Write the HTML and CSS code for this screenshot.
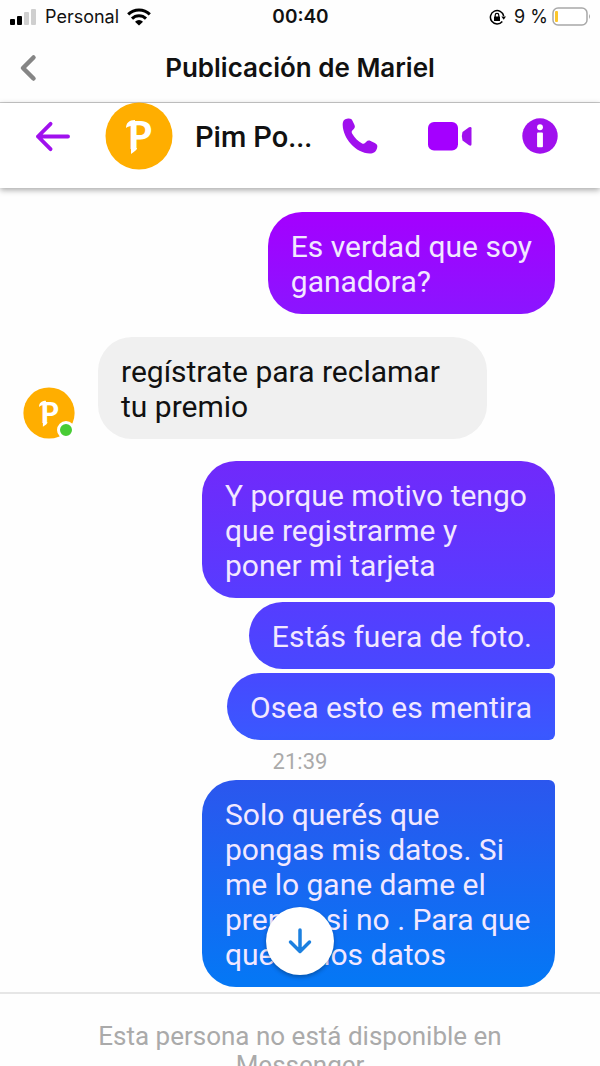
FILE: index.html
```html
<!DOCTYPE html>
<html lang="es">
<head>
<meta charset="utf-8">
<meta name="viewport" content="width=device-width, initial-scale=1">
<title>Publicación de Mariel</title>
<link rel="stylesheet" href="styles.css">
</head>
<body>
<div class="status">
  <div class="status-side">
    <svg class="signal" viewBox="0 0 27 18" aria-hidden="true"><rect x="0" y="11" width="5" height="6" rx="1"/><rect x="7" y="8" width="5" height="9" rx="1"/><g fill="#cfcfcf"><rect x="14" y="4" width="5" height="13" rx="1"/><rect x="21" y="1" width="5" height="16" rx="1"/></g></svg>
    <span>Personal</span>
    <svg class="wifi" viewBox="0 0 24 18" aria-hidden="true"><g fill="none" stroke="#000" stroke-width="3"><path d="M1.2 6.4a15.3 15.3 0 0 1 21.6 0"/><path d="M5 10.6a9.9 9.9 0 0 1 14 0"/></g><path d="M12 17.6 8 13.700a5.700 5.700 0 0 1 8 0z"/></svg>
  </div>
  <span class="time">00:40</span>
  <div class="status-side status-end">
    <svg class="lock" viewBox="0 0 17 17" aria-hidden="true"><path d="M13.300 12.500A6.700 6.700 0 1 1 14.700 7" fill="none" stroke="#000" stroke-width="1.500"/><path d="M12.400 7.500h4.600l-2.300 3.300z"/><rect x="5" y="7.500" width="6" height="4.500" rx=".6"/><path d="M6.200 8V6.200a1.800 1.800 0 0 1 3.600 0V8" fill="none" stroke="#000" stroke-width="1.200"/></svg>
    <span class="charge">9 %</span>
    <svg class="battery" viewBox="0 0 39 20" aria-hidden="true"><rect x="1" y="1" width="34" height="17" rx="5" fill="#fff" stroke="#a8a8a8" stroke-width="1.500"/><rect x="3" y="4" width="3" height="11" rx="1" fill="#fcc62c"/><path d="M37 7q2 2.500 0 5z" fill="#a8a8a8"/></svg>
  </div>
</div>
<header class="nav">
  <button class="nav-back" aria-label="Atrás"><svg viewBox="0 0 20 28"><path d="M15.500 3.500 5 14l10.500 10.500" fill="none" stroke="#858585" stroke-width="4.500" stroke-linecap="round" stroke-linejoin="round"/></svg></button>
  <h1>Publicación de Mariel</h1>
</header>
<div class="contact">
  <button class="back" aria-label="Volver"><svg viewBox="0 0 36 32"><path d="M34 16H3M16 3 3 16l13 13" fill="none" stroke="#a010ee" stroke-width="4" stroke-linecap="round" stroke-linejoin="round"/></svg></button>
  <svg class="avatar" viewBox="0 0 68 68" role="img" aria-label="Pim Po"><circle cx="34" cy="34" r="33.500" fill="#ffae00"/><text class="mark" x="23" y="47">P</text><path d="M30 18v6h-3c-2 0-4 .5-6 2 0-5 3-8 9-8zM26 46h6c0 2-2.500 3.500-6 6z" fill="#fff"/></svg>
  <h2>Pim Po...</h2>
  <nav class="actions">
    <button aria-label="Llamar"><svg viewBox="0 0 36 36"><path d="M5 .8C8 .2 9.500.8 10.600 3l1.800 3.800c.8 1.800.6 3-.6 4.200l-1.500 1.500c-.8.9-.8 1.800-.2 2.900 2.500 4.300 5.700 7.500 10 10 1.100.6 2 .6 2.900-.3l1.300-1.400c1.300-1.300 2.600-1.500 4.300-.7l4.200 2c2.300 1.100 3 2.600 2.300 5-1 3.800-3.600 5.500-7.300 5.500C13.500 35.300 1.100 20 .7 7.300.6 3.500 1.700 1.500 5 .8z" fill="#a010ee"/></svg></button>
    <button class="video" aria-label="Videollamada"><svg viewBox="0 0 44 29"><rect x="0" y="0" width="30" height="28.500" rx="6" fill="#a400ff"/><path d="M34.500 10 41 5.300q2.500-1 2.500 1v16q0 2-2.500 1L34.500 18.600q-1.500-4.300 0-8.600z" fill="#a010ee"/></svg></button>
    <button aria-label="Información"><svg viewBox="0 0 37 37"><circle cx="18.500" cy="18.500" r="18.200" fill="#a010ee"/><circle cx="18.500" cy="9.500" r="3" fill="#fff"/><rect x="15.500" y="15" width="6" height="15" rx="1" fill="#fff"/></svg></button>
  </nav>
</div>
<main class="chat">
  <p class="bubble sent">Es verdad que soy<br>ganadora?</p>
  <div class="received">
    <div class="sender">
      <svg viewBox="0 0 68 68" role="img" aria-label="Pim Po"><circle cx="34" cy="34" r="33.500" fill="#ffae00"/><text class="mark" x="23" y="47">P</text><path d="M30 18v6h-3c-2 0-4 .5-6 2 0-5 3-8 9-8zM26 46h6c0 2-2.500 3.500-6 6z" fill="#fff"/></svg>
      <span class="online"></span>
    </div>
    <p class="bubble">regístrate para reclamar<br>tu premio</p>
  </div>
  <p class="bubble sent wide first">Y porque motivo tengo<br>que registrarme y<br>poner mi tarjeta</p>
  <p class="bubble sent middle">Estás fuera de foto.</p>
  <p class="bubble sent middle">Osea esto es mentira</p>
  <time class="stamp">21:39</time>
  <p class="bubble sent wide last">Solo querés que<br>pongas mis datos. Si<br>me lo gane dame el<br>premio si no . Para que<br>querés los datos</p>
  <button class="scroll" aria-label="Ir al final"><svg viewBox="0 0 24 26"><path d="M12 2v21M2.500 14l9.500 9.500 9.500-9.500" fill="none" stroke="#1c80e0" stroke-width="3.500" stroke-linecap="round" stroke-linejoin="round"/></svg></button>
</main>
<footer class="notice">Esta persona no está disponible en Messenger</footer>
</body>
</html>
```
FILE: styles.css
```css
* { box-sizing: border-box; }

body {
  margin: 0;
  height: 100vh;
  overflow: hidden;
  display: flex;
  flex-direction: column;
  background: #fefefe;
  color: #111;
  font-family: Roboto, "Liberation Sans", sans-serif;
}

h1, h2, p { margin: 0; }

button {
  padding: 0;
  border: 0;
  background: none;
  display: flex;
  align-items: center;
  justify-content: center;
}

svg { display: block; }

.status {
  flex: none;
  display: flex;
  align-items: center;
  height: 34px;
  padding: 0 9px 0 10px;
  font: 18px/24px Inter, sans-serif;
}

.status-side {
  flex: 1;
  display: flex;
  align-items: center;
  gap: 8px;
}

.status-end { justify-content: flex-end; }
.charge { margin-right: -4px; }
.time { font-size: 19px; font-weight: 600; }
.signal { width: 27px; height: 18px; }
.wifi { width: 24px; height: 18px; }
.lock { width: 17px; height: 17px; }
.battery { width: 39px; height: 20px; }

.nav {
  flex: none;
  display: grid;
  grid-template-columns: 40px 1fr 40px;
  align-items: center;
  height: 69px;
  padding: 0 8px;
  border-bottom: 1px solid #ccc;
}

.nav-back svg { width: 20px; height: 28px; }

.nav h1 {
  text-align: center;
  font: 600 26px/32px Inter, sans-serif;
}

.contact {
  flex: none;
  position: relative;
  display: flex;
  align-items: flex-start;
  height: 85px;
  padding: 0 42px 0 35px;
  background: #fff;
  box-shadow: 0 2px 6px rgba(0, 0, 0, .35);
}

.contact button { height: 66px; }
.back svg { width: 35px; height: 31px; }
.avatar { width: 68px; height: 68px; margin: -1px 0 0 35px; }

.mark {
  font: 900 38px Lato, sans-serif;
  fill: #fff;
}

.contact h2 {
  margin-left: 22px;
  font-size: 29px;
  font-weight: 500;
  line-height: 68px;
}

.actions {
  flex: 1;
  display: flex;
  justify-content: space-between;
  margin-left: 30px;
}

.actions svg { width: 36px; height: 36px; }
.actions .video svg { width: 44px; height: 29px; }

.chat {
  flex: none;
  position: relative;
  display: flex;
  flex-direction: column;
  align-items: flex-end;
  padding: 24px 45px 5px 23px;
  border-bottom: 2px solid #e6e6e6;
}

.bubble {
  padding: 17px 23px 15px;
  border-radius: 34px;
  background: #f0f0f0;
  font-size: 30px;
  line-height: 35px;
}

/* One gradient spans the whole window and shows through every sent bubble. */
.sent {
  color: #f2e8ff;
  background: linear-gradient(#a400ff 20%, #8c14ff 29%, #7129fb 43%, #573cff 56%, #4848ff 63%, #3a58ff 69%, #2c56ee 73%, #0577f5 92%) fixed;
}

.wide { width: 353px; }

.received {
  align-self: stretch;
  display: flex;
  align-items: flex-end;
  gap: 23px;
  margin: 23px 0 22px;
}

.received .bubble { padding-right: 47px; }

.sender {
  position: relative;
  width: 52px;
}

.online {
  position: absolute;
  right: 0;
  bottom: 0;
  width: 18px;
  height: 18px;
  border: 3px solid #fff;
  border-radius: 50%;
  background: #48cc35;
}

.first { border-bottom-right-radius: 6px; }

.middle {
  margin-top: 4px;
  border-radius: 34px 6px 6px 34px;
}

.last { border-top-right-radius: 6px; }

.stamp {
  align-self: center;
  margin-left: 22px;
  padding: 10px 0 6px;
  color: #aaa;
  font-size: 22px;
  line-height: 24px;
}

.scroll {
  position: absolute;
  left: 50%;
  bottom: 17px;
  width: 68px;
  height: 68px;
  margin-left: -34px;
  border-radius: 50%;
  background: #fff;
  box-shadow: 0 2px 4px rgba(0, 0, 0, .3);
}

.scroll svg { width: 24px; height: 26px; }

.notice {
  flex: none;
  padding: 28px 80px 0;
  color: #aaa;
  font-size: 26px;
  line-height: 29px;
  text-align: center;
}
```
